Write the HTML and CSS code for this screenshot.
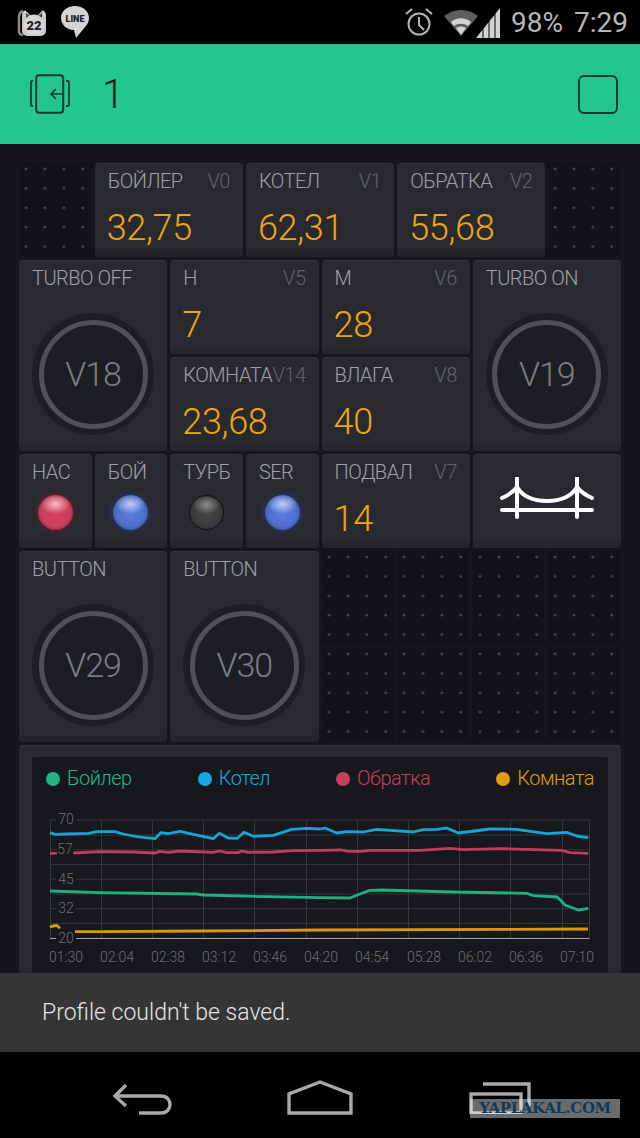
FILE: index.html
```html
<!DOCTYPE html>
<html lang="en">
<head>
  <meta charset="UTF-8" />
  <meta name="viewport" content="width=device-width, initial-scale=1.0"/>
  <title>Blynk dashboard</title>
  <link rel="stylesheet" href="styles.css">
</head>
<body>
<div class="phone">

  <div class="status-bar">
    <svg class="icon-cat" width="30" height="28" viewBox="0 0 30 28">
      <path d="M6 2C3 3 2 5 2 8v14c0 2 1 4 4 4" fill="none" stroke="#8d8d8d" stroke-width="2.4"/>
      <rect x="5" y="1" width="24" height="26" rx="5" fill="#c9c9c9"/>
      <path d="M8 1l6 6h6l6-6v-1H8z" fill="#000"/>
      <path d="M9 4l5 4h6l5-4v6H9z" fill="#444"/>
      <circle cx="17" cy="16" r="10.5" fill="#d6d6d6"/>
      <text x="17" y="21" class="cat-num">22</text>
    </svg>
    <svg class="icon-line" width="30" height="36" viewBox="0 0 30 36">
      <path d="M15 2C7 2 1 7 1 14c0 7 6 12 13 12l2 8 9-11c3-3 4-6 4-9C29 7 23 2 15 2z" fill="#d4d4d4"/>
      <text x="15" y="18" class="line-txt">LINE</text>
    </svg>
    <span class="status-gap"></span>
    <svg class="icon-alarm" width="30" height="36" viewBox="0 0 30 36">
      <circle cx="15" cy="20" r="10.5" fill="none" stroke="#b5b5b5" stroke-width="2"/>
      <path d="M15 13v8l5 5" fill="none" stroke="#b5b5b5" stroke-width="2"/>
      <path d="M2 10l6-5M28 10l-6-5" stroke="#b5b5b5" stroke-width="2"/>
    </svg>
    <svg class="icon-wifi" width="36" height="30" viewBox="0 0 36 30">
      <path d="M1 9C11 1 25 1 35 9L18 29z" fill="#5e5e5e"/>
      <path d="M8 15c6-5 14-5 20 0l-3 4c-4-3-10-3-14 0z" fill="#d2d2d2"/>
      <path d="M13 21c3-2 7-2 10 0l-5 7z" fill="#d2d2d2"/>
    </svg>
    <svg class="icon-signal" width="24" height="32" viewBox="0 0 24 32">
      <path d="M0 32L24 2v30z" fill="#d2d2d2"/>
      <path d="M7 32V23M13 32V15M19 32V8" stroke="#000" stroke-width="1"/>
    </svg>
    <span class="status-text pct">98%</span>
    <span class="status-text">7:29</span>
  </div>

  <div class="app-bar">
    <svg class="icon-project" width="44" height="42" viewBox="0 0 44 42">
      <rect x="7.2" y="1.2" width="27" height="37.6" rx="3" fill="none" stroke="#0d3b2e" stroke-width="2"/>
      <path d="M4 7H3Q2 7 2 9v21q0 2 1 2h1M37 7h2q1 0 1 2v21q0 2-1 2h-2" fill="none" stroke="#0d3b2e" stroke-width="1.8"/>
      <path d="M34 20H22M27 15l-5 5 5 5" fill="none" stroke="#0d3b2e" stroke-width="1.6"/>
    </svg>
    <span class="project-name">1</span>
    <span class="play-box"></span>
  </div>

  <div class="dash">
    <div class="grid">
      <div class="empty"></div>
      <div class="widget w2"><div class="head"><span>БОЙЛЕР</span><span class="pin">V0</span></div><div class="value">32,75</div></div>
      <div class="widget w2"><div class="head"><span>КОТЕЛ</span><span class="pin">V1</span></div><div class="value">62,31</div></div>
      <div class="widget w2"><div class="head"><span>ОБРАТКА</span><span class="pin">V2</span></div><div class="value">55,68</div></div>
      <div class="empty"></div>

      <div class="widget w2 tall"><div class="head"><span>TURBO OFF</span></div><div class="knob"><div class="knob-ring">V18</div></div></div>
      <div class="widget w2"><div class="head"><span>Н</span><span class="pin">V5</span></div><div class="value">7</div></div>
      <div class="widget w2"><div class="head"><span>М</span><span class="pin">V6</span></div><div class="value">28</div></div>
      <div class="widget w2 tall"><div class="head"><span>TURBO ON</span></div><div class="knob"><div class="knob-ring">V19</div></div></div>
      <div class="widget w2"><div class="head"><span>КОМНАТА</span><span class="pin">V14</span></div><div class="value">23,68</div></div>
      <div class="widget w2"><div class="head"><span>ВЛАГА</span><span class="pin">V8</span></div><div class="value">40</div></div>

      <div class="widget"><div class="head"><span>НАС</span></div><div class="led led-red"></div></div>
      <div class="widget"><div class="head"><span>БОЙ</span></div><div class="led led-blue"></div></div>
      <div class="widget"><div class="head"><span>ТУРБ</span></div><div class="led led-off"></div></div>
      <div class="widget"><div class="head"><span>SER</span></div><div class="led led-blue"></div></div>
      <div class="widget w2"><div class="head"><span>ПОДВАЛ</span><span class="pin">V7</span></div><div class="value">14</div></div>
      <div class="widget w2 bridge">
        <svg width="96" height="42" viewBox="0 0 96 42">
          <path d="M18 1v39M78 1v39" stroke="#fff" stroke-width="4" stroke-linecap="round" fill="none"/>
          <path d="M3 33h90" stroke="#fff" stroke-width="4" stroke-linecap="round" fill="none"/>
          <path d="M3 21C10 18 15 14 18 10C24 20 34 24 48 24C62 24 72 20 78 10C81 14 86 18 93 21" stroke="#fff" stroke-width="4" stroke-linecap="round" fill="none"/>
        </svg>
      </div>

      <div class="widget w2 tall"><div class="head"><span>BUTTON</span></div><div class="knob"><div class="knob-ring">V29</div></div></div>
      <div class="widget w2 tall"><div class="head"><span>BUTTON</span></div><div class="knob"><div class="knob-ring">V30</div></div></div>
      <div class="empty"></div><div class="empty"></div><div class="empty"></div><div class="empty"></div>
      <div class="empty"></div><div class="empty"></div><div class="empty"></div><div class="empty"></div>

      <div class="graph">
        <div class="graph-inner">
          <div class="legend">
            <span class="leg leg-green">Бойлер</span>
            <span class="leg leg-blue">Котел</span>
            <span class="leg leg-red">Обратка</span>
            <span class="leg leg-yellow">Комната</span>
          </div>
          <!-- viewBox uses screen coordinates so points can be read straight off the chart -->
          <svg class="plot" width="576" height="175" viewBox="32 800 576 175">
            <g class="grid-lines">
              <path d="M50 820H589M50 835H589M50 849.7H589M50 864.4H589M50 879.2H589M50 894H589M50 908.7H589M50 923.4H589"/>
              <path d="M50.5 820V938M101.5 820V938M152.5 820V938M203.5 820V938M254.5 820V938M306.5 820V938M357.5 820V938M408.5 820V938M459.5 820V938M510.5 820V938M562.5 820V938M589.5 820V938"/>
            </g>
            <path class="axis" d="M50 938.5H589.5"/>
            <g class="label-bg">
              <rect x="56" y="810" width="20" height="19"/>
              <rect x="57" y="840" width="16" height="18"/>
              <rect x="56" y="869" width="20" height="19"/>
              <rect x="56" y="898" width="20" height="19"/>
              <rect x="56" y="928" width="20" height="19"/>
            </g>
            <polyline class="ln ln-blue" points="50,832.7 55,834.3 66.7,834 88.3,833.3 96.7,831.7 115,831.7 123.3,834 136.7,836.7 155,838.7 160.7,832.7 168.3,833.7 180,831.3 190,833.7 213.3,838.7 219.3,833.3 228.3,838 237.3,838.3 244,832.3 253.3,836.3 273.3,835.3 291.7,829.3 306.7,828.3 320,829 325,828 336.7,833 346.7,831.7 363.3,832 376.7,829.3 413.3,832 423.3,829.7 436.7,829.3 446.7,828 458.3,833 466.7,832 490,829 516.7,829.3 546.7,833.7 566.7,832.3 576.7,836 588.3,837.7"/>
            <polyline class="ln ln-red" points="50,853.3 57,853.3"/>
            <polyline class="ln ln-red" points="73.3,853 100,851.7 133.3,852 155,853 160,851.3 168.3,852.3 180,851 213.3,852.3 219.3,851 226.7,852.7 238.3,852.7 241.7,851 248.3,852.3 273.3,852 293.3,850.7 320,850.3 341.7,850 348.3,851.3 361.7,851.3 370,850.3 420,850.3 450,848.3 463.3,849.7 500,848.7 561.7,850.3 570,852.7 588.3,853.3"/>
            <polyline class="ln ln-green" points="50,891 100,892.7 196.7,894 203.3,895 266.7,896.7 320,897.7 350,898 356.7,895.3 370,890.3 381.7,890 453.3,892 526.7,893.3 533.3,895.7 557.3,897 565,905 578.3,910 588.3,908.3"/>
            <polyline class="ln ln-yellow" points="50,927.3 53,926 56.7,925.3 60,928.3"/>
            <polyline class="ln ln-yellow" points="75,931.7 100,931.7 200,931 320,930 588,929"/>
            <g class="y-labels">
              <text x="66" y="824">70</text>
              <text x="65" y="854">57</text>
              <text x="66" y="884">45</text>
              <text x="66" y="913">32</text>
              <text x="66" y="943">20</text>
            </g>
            <g class="x-labels">
              <text x="66" y="962">01:30</text>
              <text x="117" y="962">02:04</text>
              <text x="168" y="962">02:38</text>
              <text x="219" y="962">03:12</text>
              <text x="270" y="962">03:46</text>
              <text x="321" y="962">04:20</text>
              <text x="372" y="962">04:54</text>
              <text x="424" y="962">05:28</text>
              <text x="475" y="962">06:02</text>
              <text x="526" y="962">06:36</text>
              <text x="577" y="962">07:10</text>
            </g>
          </svg>
        </div>
      </div>
    </div>
  </div>

  <div class="toast">Profile couldn't be saved.</div>

  <div class="nav-bar">
    <svg class="nav-back" width="60" height="32" viewBox="0 0 60 32">
      <path d="M14 2L3 13l11 10M3 13h46c12 0 12 17 0 17H27" fill="none" stroke="#a9a9a9" stroke-width="3.4"/>
    </svg>
    <svg class="nav-home" width="66" height="35" viewBox="0 0 66 35">
      <path d="M2 33V14L33 2l31 12v19z" fill="none" stroke="#a9a9a9" stroke-width="3.4"/>
    </svg>
    <svg class="nav-recent" width="62" height="32" viewBox="0 0 62 32">
      <path d="M14 2h46v22" fill="none" stroke="#a9a9a9" stroke-width="3.4"/>
      <rect x="2" y="12" width="50" height="19" fill="none" stroke="#a9a9a9" stroke-width="3.4"/>
    </svg>
    <div class="watermark">YAPLAKAL.COM</div>
  </div>

</div>
</body>
</html>
```

FILE: styles.css
```css
* {
  box-sizing: border-box;
}

body {
  margin: 0;
  background: #000;
  font-family: 'Roboto', sans-serif;
}

.phone {
  position: relative;
  width: 640px;
  height: 1138px;
  display: flex;
  flex-direction: column;
  overflow: hidden;
}

/* status bar */
.status-bar {
  height: 44px;
  background: #000;
  display: flex;
  align-items: center;
  padding: 0 12px 0 17px;
}

.icon-cat {
  margin-top: 1px;
}

.icon-line {
  margin-left: 13px;
}

.status-gap {
  flex: 1;
}

.icon-wifi {
  margin-left: 9px;
}

.icon-signal {
  margin-left: -3px;
}

.status-text {
  color: #b7b7b7;
  font-size: 28px;
  margin-left: 11px;
}

.cat-num {
  font-family: 'Roboto', sans-serif;
  font-size: 13px;
  font-weight: 900;
  fill: #222;
  text-anchor: middle;
}

.line-txt {
  font-family: 'Roboto', sans-serif;
  font-size: 9px;
  font-weight: 900;
  fill: #222;
  text-anchor: middle;
}

/* app bar */
.app-bar {
  height: 100px;
  background: #24c690;
  display: flex;
  align-items: center;
  padding: 0 22px 0 29px;
}

.icon-project {
  margin-top: 2px;
}

.project-name {
  font-size: 40px;
  font-weight: 300;
  color: #04201a;
  margin-left: 29px;
  flex: 1;
}

.play-box {
  width: 40px;
  height: 39px;
  border: 2.5px solid #0d3b2e;
  border-radius: 6px;
}

/* dashboard */
.dash {
  flex: 1;
  background: #15161b;
  padding: 19px 19px 0;
  min-height: 0;
  overflow: hidden;
}

.grid {
  display: grid;
  grid-template-columns: repeat(8, minmax(0, 1fr));
  grid-auto-rows: 94px;
  gap: 3px;
}

.empty {
  background-color: #121318;
  background-image: radial-gradient(circle, #45464a 1px, transparent 1.8px);
  background-size: 18.9px 19.4px;
  background-position: -2.4px -3.7px;
}

.widget {
  background: #292a2f;
  border-top: 1px solid #34353a;
  border-radius: 4px;
  box-shadow: inset 0 -7px 0 #25262a;
  padding: 5px 13px 0;
  color: #a0a1a4;
  display: flex;
  flex-direction: column;
}

.w2 {
  grid-column: span 2;
}

.tall {
  grid-row: span 2;
}

.head {
  display: flex;
  justify-content: space-between;
  font-size: 20px;
  font-weight: 300;
  line-height: 24px;
  letter-spacing: -0.5px;
  white-space: nowrap;
}

.pin {
  color: #626367;
}

.value {
  color: #eea516;
  font-size: 36px;
  font-weight: 300;
  line-height: 40px;
  letter-spacing: -0.3px;
  margin-top: 15px;
  margin-left: -1px;
}

/* buttons */
.knob {
  width: 122px;
  height: 122px;
  border-radius: 50%;
  background: #1d1e22;
  margin: 23px 0 0 0;
  align-self: center;
  display: flex;
  align-items: center;
  justify-content: center;
}

.knob-ring {
  width: 109px;
  height: 109px;
  border: 5px solid #505154;
  border-radius: 50%;
  display: flex;
  align-items: center;
  justify-content: center;
  font-size: 34px;
  font-weight: 300;
  letter-spacing: -1px;
  color: #7c7d80;
}

/* leds */
.led {
  width: 35px;
  height: 35px;
  border-radius: 50%;
  align-self: center;
  margin-top: 11px;
}

.led-red {
  background: radial-gradient(ellipse 42% 28% at 50% 26%, #f2bcc6 0%, rgba(242, 188, 198, 0) 100%), radial-gradient(circle, #dc3f60 0%, #c93f5c 58%, #7a2436 85%, #4f2630 100%);
  box-shadow: 0 0 5px 2px rgba(120, 30, 50, 0.5);
}

.led-blue {
  background: radial-gradient(ellipse 42% 28% at 50% 26%, #c3cff2 0%, rgba(195, 207, 242, 0) 100%), radial-gradient(circle, #5a7fdc 0%, #4f70cc 58%, #33467f 85%, #2a3350 100%);
  box-shadow: 0 0 5px 2px rgba(40, 60, 130, 0.5);
}

.led-off {
  background: radial-gradient(ellipse 42% 28% at 50% 26%, #8a8a8a 0%, rgba(138, 138, 138, 0) 100%), radial-gradient(circle, #4a4a4c 0%, #3a3a3c 60%, #1f1f20 100%);
  border: 1.5px solid #111;
}

.bridge {
  align-items: center;
  justify-content: center;
  padding: 0 0 7px;
}

/* graph */
.graph {
  grid-column: span 8;
  grid-row: span 3;
  background: #292a2f;
  border-top: 1px solid #34353a;
  border-radius: 4px;
  padding: 11px 13px 0;
}

.graph-inner {
  background: #17181b;
  border-radius: 3px;
  height: 240px;
}

.legend {
  display: flex;
  justify-content: space-between;
  padding: 9px 14px 0;
  font-size: 20px;
  font-weight: 300;
  letter-spacing: -0.5px;
  line-height: 24px;
  height: 43px;
}

.leg::before {
  content: "";
  display: inline-block;
  width: 14px;
  height: 14px;
  border-radius: 50%;
  margin-right: 7px;
  vertical-align: -1px;
  background: currentColor;
}

.leg-green {
  color: #22b583;
}

.leg-blue {
  color: #14a8e4;
}

.leg-red {
  color: #c93f5f;
}

.leg-yellow {
  color: #e29c10;
}

.plot {
  display: block;
}

.grid-lines path {
  stroke: #36373a;
  stroke-width: 1;
  fill: none;
}

.axis {
  stroke: #a5a5a7;
  stroke-width: 1;
}

.label-bg rect {
  fill: #17181b;
}

.ln {
  fill: none;
  stroke-width: 2.8;
  stroke-linejoin: round;
}

.ln-blue {
  stroke: #17a3d8;
}

.ln-red {
  stroke: #c23d5d;
}

.ln-green {
  stroke: #20b07f;
}

.ln-yellow {
  stroke: #d9990f;
}

.y-labels text,
.x-labels text {
  font-family: 'Roboto', sans-serif;
  font-weight: 300;
  font-size: 14px;
  fill: #6f7073;
  text-anchor: middle;
}

/* toast and nav */
.toast {
  position: absolute;
  left: 0;
  right: 0;
  bottom: 86px;
  height: 79px;
  background: #353535;
  color: #e4e4e4;
  font-size: 23px;
  font-weight: 300;
  padding: 27px 0 0 42px;
  line-height: 26px;
}

.nav-bar {
  position: relative;
  height: 86px;
  background: #000;
}

.nav-back,
.nav-home,
.nav-recent,
.watermark {
  position: absolute;
}

.nav-back {
  left: 112px;
  top: 31px;
}

.nav-home {
  left: 287px;
  top: 28px;
}

.nav-recent {
  left: 469px;
  top: 30px;
}

.watermark {
  left: 470px;
  top: 47px;
  width: 150px;
  height: 19px;
  background: rgba(255, 255, 255, 0.42);
  color: #0f3a5e;
  font-family: 'DejaVu Serif', serif;
  font-size: 15px;
  font-weight: 700;
  line-height: 19px;
  text-align: center;
  letter-spacing: -0.4px;
}
```
